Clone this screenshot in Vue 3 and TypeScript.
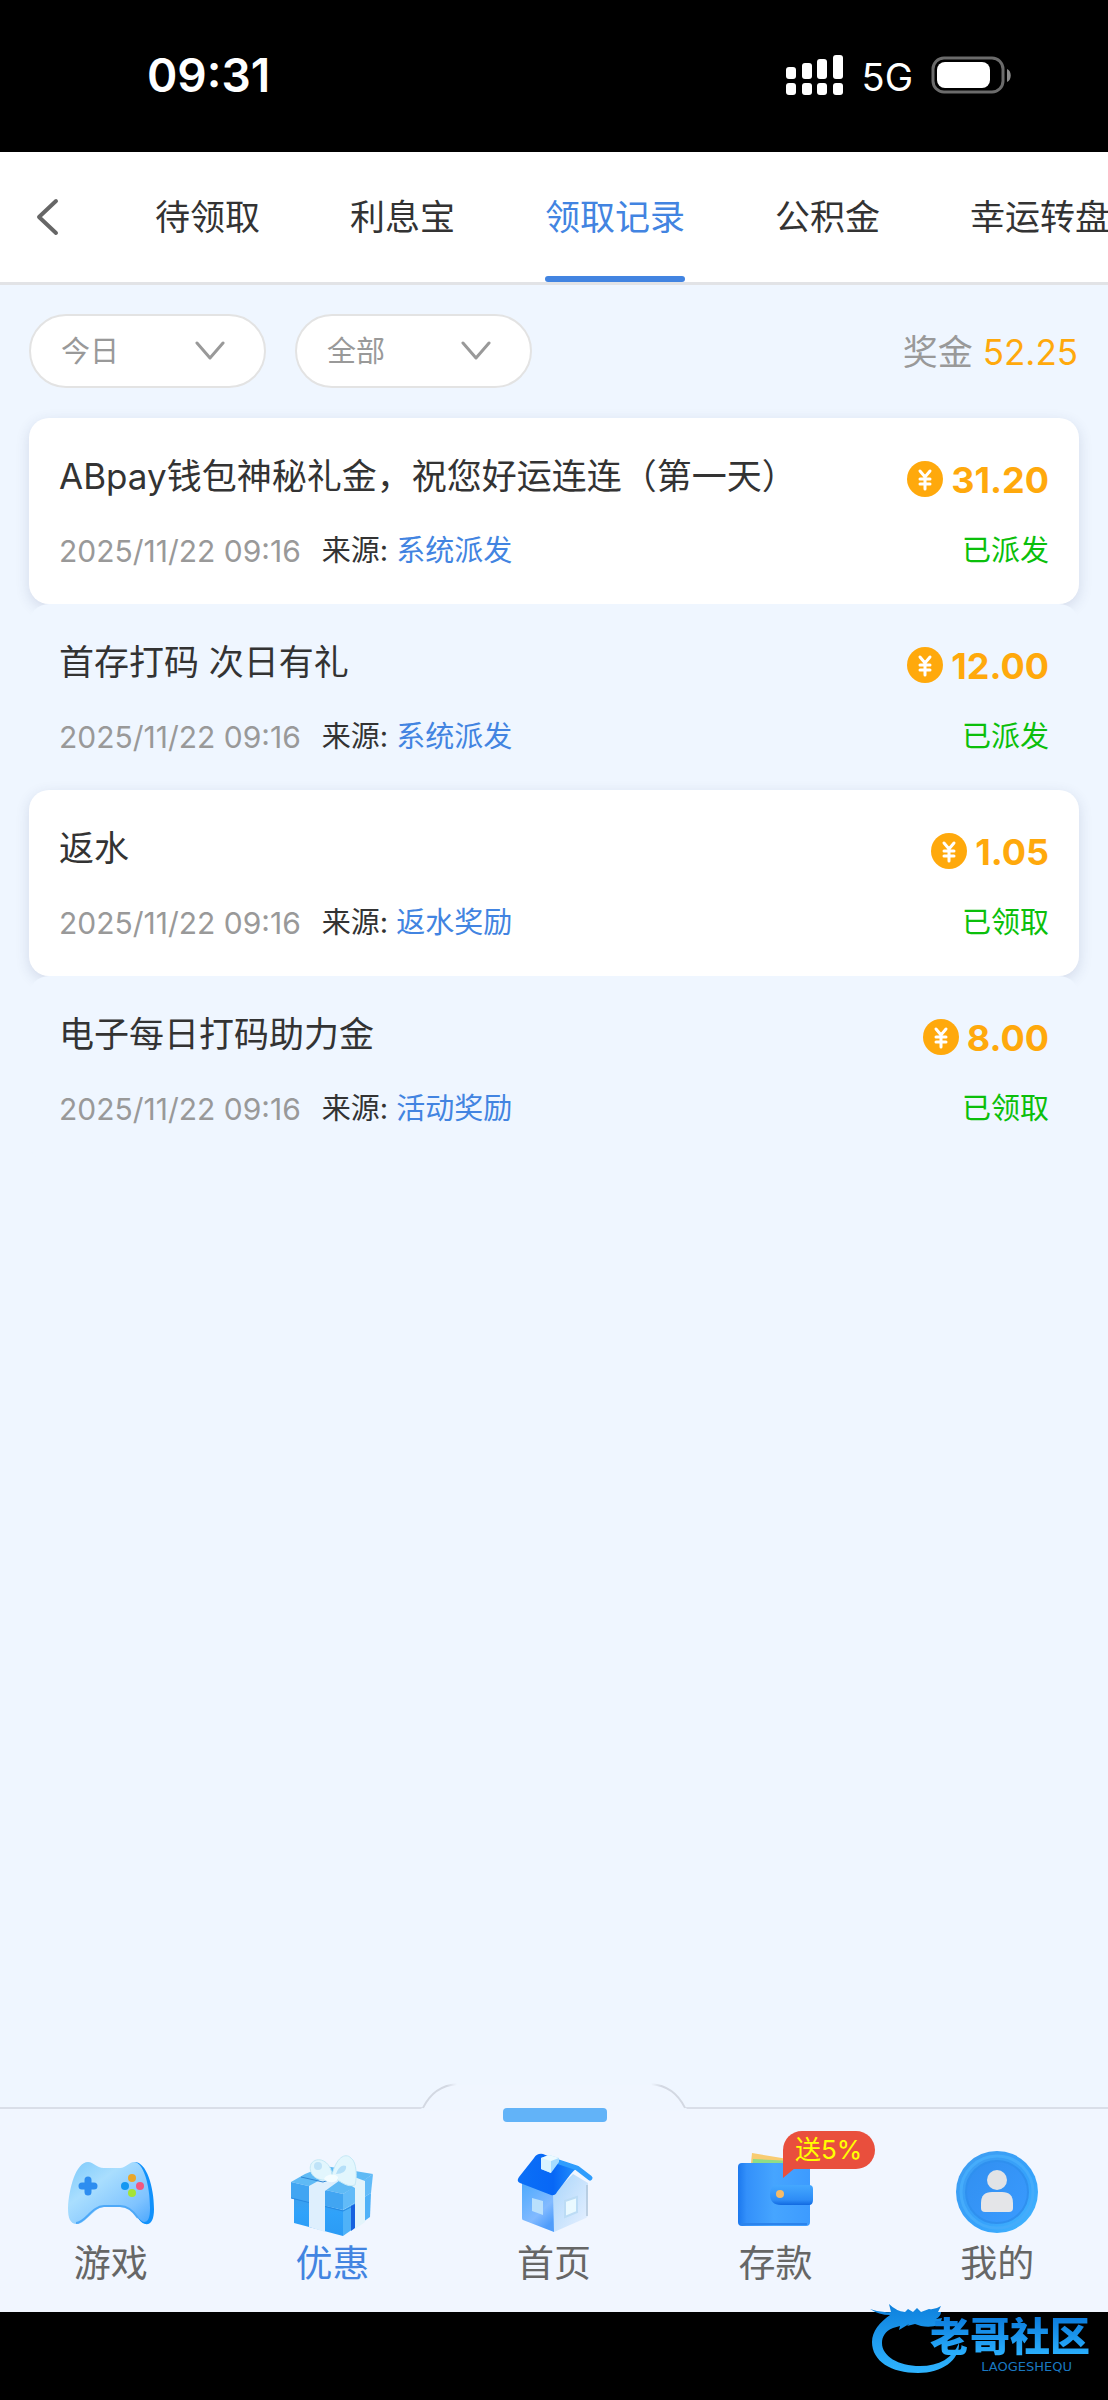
<script setup lang="ts">
import { ref } from 'vue'

interface BonusRecord {
  title: string
  time: string
  source: string
  amount: string
  status: string
}

interface NavItem {
  key: string
  label: string
  badge?: string
}

const tabs: string[] = ['待领取', '利息宝', '领取记录', '公积金', '幸运转盘']
const activeTab = ref('领取记录')
const day = ref('今日')
const kind = ref('全部')

const records: BonusRecord[] = [
  { title: 'ABpay钱包神秘礼金，祝您好运连连（第一天）', time: '2025/11/22 09:16', source: '系统派发', amount: '31.20', status: '已派发' },
  { title: '首存打码 次日有礼', time: '2025/11/22 09:16', source: '系统派发', amount: '12.00', status: '已派发' },
  { title: '返水', time: '2025/11/22 09:16', source: '返水奖励', amount: '1.05', status: '已领取' },
  { title: '电子每日打码助力金', time: '2025/11/22 09:16', source: '活动奖励', amount: '8.00', status: '已领取' },
]

const navItems: NavItem[] = [
  { key: 'game', label: '游戏' },
  { key: 'gift', label: '优惠' },
  { key: 'home', label: '首页' },
  { key: 'wallet', label: '存款', badge: '送5%' },
  { key: 'mine', label: '我的' },
]
const activeNav = ref('gift')
</script>

<template>
  <div class="app">
    <div class="status-bar">
      <span class="clock">09:31</span>
      <div class="signals">
        <svg class="bars" width="58" height="42" viewBox="0 0 58 42" fill="#fff" aria-hidden="true">
          <rect x="0" y="13" width="10" height="12" rx="3" />
          <rect x="16" y="9" width="10" height="16" rx="3" />
          <rect x="31" y="5" width="10" height="20" rx="3" />
          <rect x="47" y="1" width="10" height="24" rx="3" />
          <rect x="0" y="29" width="10" height="12" rx="3" />
          <rect x="16" y="29" width="10" height="12" rx="3" />
          <rect x="31" y="29" width="10" height="12" rx="3" />
          <rect x="47" y="29" width="10" height="12" rx="3" />
        </svg>
        <span class="network">5G</span>
        <svg width="82" height="38" viewBox="0 0 82 38" aria-hidden="true">
          <rect x="2" y="2" width="70" height="34" rx="11" fill="none" stroke="#6b6b6b" stroke-width="3" />
          <rect x="6" y="6" width="53" height="26" rx="8" fill="#fff" />
          <path d="M76 13c5 2 5 11 0 13z" fill="#8a8a8a" />
        </svg>
      </div>
    </div>

    <header class="tab-bar">
      <button class="back" type="button" aria-label="返回">
        <svg width="24" height="38" viewBox="0 0 24 38" aria-hidden="true">
          <path d="M21 3 4 19l17 16" fill="none" stroke="#666" stroke-width="4" stroke-linecap="round" stroke-linejoin="round" />
        </svg>
      </button>
      <div class="tabs">
        <button
          v-for="tab in tabs"
          :key="tab"
          type="button"
          class="tab"
          :class="{ active: tab === activeTab }"
          @click="activeTab = tab"
        >{{ tab }}</button>
      </div>
    </header>

    <main class="content">
      <div class="filters">
        <div class="picker">
          <select v-model="day" aria-label="日期">
            <option>今日</option>
          </select>
          <svg class="chevron" width="30" height="22" viewBox="0 0 30 22" aria-hidden="true">
            <path d="m2 3 13 15L28 3" fill="none" stroke="#999" stroke-width="3" stroke-linecap="round" stroke-linejoin="round" />
          </svg>
        </div>
        <div class="picker">
          <select v-model="kind" aria-label="类型">
            <option>全部</option>
          </select>
          <svg class="chevron" width="30" height="22" viewBox="0 0 30 22" aria-hidden="true">
            <path d="m2 3 13 15L28 3" fill="none" stroke="#999" stroke-width="3" stroke-linecap="round" stroke-linejoin="round" />
          </svg>
        </div>
        <p class="total">奖金 <span class="sum">52.25</span></p>
      </div>

      <ul class="records">
        <li v-for="(item, i) in records" :key="i" class="record">
          <div class="row">
            <h2 class="title">{{ item.title }}</h2>
            <div class="amount">
              <svg width="36" height="36" viewBox="0 0 36 36" aria-hidden="true">
                <circle cx="18" cy="18" r="18" fill="#ffa90c" />
                <path d="m13 10 5 6 5-6M18 16v12M13 18h10M13 23h10" fill="none" stroke="#fff" stroke-width="3" stroke-linecap="round" />
              </svg>
              <span class="value">{{ item.amount }}</span>
            </div>
          </div>
          <div class="row meta">
            <span class="time">{{ item.time }}</span>
            <span class="from">来源: <span class="source">{{ item.source }}</span></span>
            <span class="state">{{ item.status }}</span>
          </div>
        </li>
      </ul>
    </main>

    <nav class="bottom-nav">
      <svg class="bump" width="266" height="28" viewBox="0 0 270 28" aria-hidden="true">
        <defs>
          <linearGradient id="edge" x1="0" x2="1" y1="0" y2="0">
            <stop offset="0" stop-color="#d3d8e2" />
            <stop offset=".09" stop-color="#d3d8e2" />
            <stop offset=".13" stop-color="#d3d8e2" stop-opacity="0" />
            <stop offset=".87" stop-color="#d3d8e2" stop-opacity="0" />
            <stop offset=".91" stop-color="#d3d8e2" />
            <stop offset="1" stop-color="#d3d8e2" />
          </linearGradient>
        </defs>
        <path d="M0 28v-2l2-1C9 11 20 2 36 1H234C250 2 261 11 268 25l2 1v2z" fill="#f0f6ff" />
        <path d="M2 25C9 11 20 2 36 1H234C250 2 261 11 268 25" fill="none" stroke="url(#edge)" stroke-width="2" />
      </svg>
      <span class="grip"></span>
      <a
        v-for="item in navItems"
        :key="item.key"
        href="#"
        class="nav-item"
        :class="{ active: item.key === activeNav }"
        @click.prevent="activeNav = item.key"
      >
        <span class="icon">
          <svg v-if="item.key === 'game'" width="90" height="90" viewBox="0 0 90 90" aria-hidden="true">
            <defs>
              <linearGradient id="pad" x1="0" x2="1" y1="0" y2="1">
                <stop offset="0" stop-color="#7cc9fb" />
                <stop offset=".35" stop-color="#a9defe" />
                <stop offset=".75" stop-color="#7fc3ff" />
                <stop offset="1" stop-color="#4aa6fd" />
              </linearGradient>
            </defs>
            <path d="M68 12c12-1 20 24 20 47 0 11-3 16-9 15-7-2-9-12-17-16z" fill="#1191fb" />
            <path d="M22 12c6 0 8 6 16 6h16c6 0 9-6 14-6 9 0 16 22 16 46 0 10-2 14-6 14-7-2-10-15-24-15H38c-10 0-18 17-27 17-7 0-9-6-9-16 1-20 8-46 20-46z" fill="url(#pad)" />
            <path d="M10 73c9 0 16-17 28-17h16c9 0 14 6 18 12" fill="none" stroke="#4ea9f8" stroke-width="2" />
            <path d="M22 30v12M16 36h12" stroke="#2d8df0" stroke-width="7" stroke-linecap="round" />
            <circle cx="66" cy="28" r="4" fill="#e9a72b" />
            <circle cx="74" cy="36" r="4" fill="#f2577f" />
            <circle cx="59" cy="36" r="4" fill="#1397f2" />
            <circle cx="66" cy="43" r="4" fill="#a5e437" />
          </svg>
          <svg v-else-if="item.key === 'gift'" width="90" height="90" viewBox="0 0 90 90" aria-hidden="true">
            <defs>
              <linearGradient id="box" x1="0" x2="0" y1="0" y2="1">
                <stop offset="0" stop-color="#3a9fee" />
                <stop offset=".4" stop-color="#2fa2fa" />
                <stop offset="1" stop-color="#2b9bf5" />
              </linearGradient>
            </defs>
            <path d="M7 48 56 60v26L7 73z" fill="url(#box)" />
            <path d="m56 60 28-17-1 24-27 19z" fill="#4fb2f8" />
            <path d="M4 32 18 24l20-8 48 8-20 14-10 6z" fill="#5fbaf5" />
            <path d="m4 32 52 12v16L4 48z" fill="#41a5f2" />
            <path d="m56 44 30-20-2 19-28 17z" fill="#62bbf8" />
            <path d="m4 48 52 13 10-5" fill="none" stroke="#2589e3" stroke-width="1" />
            <path d="m64 56 4-2v24l-4 3z" fill="#1762df" />
            <path d="M22 36 42 25l14 3-18 13v41l-16-5z" fill="#deeffd" />
            <path d="m50 27 18 11v41l10-7V31l-16-6z" fill="#e3f4fb" />
            <path d="m14 27 22 5 6-2" fill="none" stroke="#2f86d4" stroke-width="1" />
            <path d="M40 30C27 31 21 22 24 14c6-9 20-3 21 11C49 8 58 2 64 8c6 4 6 20 4 27-8 3-15-4-22-8-2 3-4 4-6 3z" fill="#e2f6fd" stroke="#c5e9f6" stroke-width="1" />
            <circle cx="31" cy="16" r="4" fill="#bfe3f8" />
            <path d="M49 24c2-7 7-10 10-8 1 5-4 8-10 8" fill="#b4dff8" />
            <path d="M37 29c2-5 11-6 14-2 0 6-9 7-14 2" fill="#f4fdff" />
          </svg>
          <svg v-else-if="item.key === 'home'" width="90" height="90" viewBox="0 0 90 90" aria-hidden="true">
            <defs>
              <linearGradient id="wallL" x1="0" x2=".6" y1="0" y2="1">
                <stop offset="0" stop-color="#4ba9fd" />
                <stop offset=".7" stop-color="#82baff" />
                <stop offset="1" stop-color="#4f9dfb" />
              </linearGradient>
              <linearGradient id="wallR" x1="0" x2="1" y1="0" y2="1">
                <stop offset="0" stop-color="#a8d5fb" />
                <stop offset="1" stop-color="#e9f1ff" />
              </linearGradient>
              <linearGradient id="roof" x1="0" x2="1" y1="0" y2="0">
                <stop offset="0" stop-color="#0b70f7" />
                <stop offset=".6" stop-color="#0767f6" />
                <stop offset="1" stop-color="#2491fc" />
              </linearGradient>
            </defs>
            <path d="m13 32 32 12v38L14 70q-1 0-1-2z" fill="url(#wallL)" />
            <path d="m44 44 20-20 15 9v32q0 2-2 3L45 82z" fill="url(#wallR)" />
            <path d="M78 35v31" stroke="#9fb5c8" stroke-width="1" />
            <path d="M25 8q3-5 9-4l34 14q-4 3-7 7L48 42q-2 4-6 3L11 33q-4-2-1-6z" fill="url(#roof)" />
            <path d="M50 12 68 18 81 28" fill="none" stroke="#2f9dfd" stroke-width="5" stroke-linecap="round" stroke-linejoin="round" />
            <path d="m32 8 8-3 10 3v4l-8 11-10-4z" fill="#a5dcff" />
            <path d="m32 8 10 2v13l-10-4z" fill="#d8f3ff" />
            <path d="m32 8 8-3 10 3-8 3z" fill="#ecfaff" />
            <path d="m23 48 11 3v14l-11-4z" fill="#b9e0fc" />
            <path d="m56 51 12-4v15l-12 5z" fill="#e9f9ff" stroke="#bcdcf5" stroke-width="2" />
          </svg>
          <svg v-else-if="item.key === 'wallet'" width="90" height="90" viewBox="0 0 90 90" aria-hidden="true">
            <defs>
              <linearGradient id="purse" x1="0" x2="1" y1="0" y2="0">
                <stop offset="0" stop-color="#1b78ee" />
                <stop offset=".12" stop-color="#3390fa" />
                <stop offset=".5" stop-color="#46a5ff" />
                <stop offset="1" stop-color="#3d9bff" />
              </linearGradient>
              <linearGradient id="flap" x1="0" x2="0" y1="0" y2="1">
                <stop offset="0" stop-color="#45a8ff" />
                <stop offset=".75" stop-color="#2d8cf6" />
                <stop offset="1" stop-color="#1169e0" />
              </linearGradient>
            </defs>
            <path d="m21 3 42 7-2 12H19z" fill="#f8cc72" />
            <path d="m22 9 40 2v7H21z" fill="#8fdd86" />
            <rect x="7" y="13" width="72" height="63" rx="4" fill="url(#purse)" />
            <path d="M10 74h66" stroke="#2b83ec" stroke-width="2" />
            <path d="M47 35h31q4 0 4 4v11q0 5-4 5H50q-11 0-11-11 0-9 8-9z" fill="url(#flap)" />
            <circle cx="49" cy="44" r="4" fill="#f6bb68" />
          </svg>
          <svg v-else width="90" height="90" viewBox="0 0 90 90" aria-hidden="true">
            <defs>
              <linearGradient id="ring" x1="0" x2="1" y1="0" y2="1">
                <stop offset="0" stop-color="#3f9df1" />
                <stop offset=".6" stop-color="#36a2fb" />
                <stop offset="1" stop-color="#43b8ff" />
              </linearGradient>
              <linearGradient id="dish" x1="0" x2="1" y1="0" y2="1">
                <stop offset="0" stop-color="#318ff0" />
                <stop offset="1" stop-color="#3a9bff" />
              </linearGradient>
            </defs>
            <circle cx="45" cy="42" r="41" fill="url(#ring)" />
            <circle cx="45" cy="42" r="36" fill="none" stroke="#45acfb" stroke-width="3" />
            <circle cx="45" cy="42" r="31" fill="url(#dish)" stroke="#2f90ef" stroke-width="2" />
            <circle cx="45" cy="30" r="10" fill="#e1e3e6" />
            <path d="M29 58V53q0-11 11-11h10q11 0 11 11v5q0 4-4 4H33q-4 0-4-4z" fill="#e4e5e8" />
          </svg>
          <span v-if="item.badge" class="badge">{{ item.badge }}</span>
        </span>
        <span class="label">{{ item.label }}</span>
      </a>
    </nav>

    <footer class="home-area">
      <div class="mark">
        <svg class="dragon" width="96" height="80" viewBox="0 0 96 80" aria-hidden="true">
          <defs>
            <linearGradient id="scale" x1="0" x2="0" y1="0" y2="1">
              <stop offset="0" stop-color="#0d80dc" />
              <stop offset="1" stop-color="#2fb4ff" />
            </linearGradient>
          </defs>
          <path d="M0 12q10 4 21 3l-2-8q7 7 16 8l3-3 5 3 4-4 4 4 8-3q6 1 12-3l-3 6h3q0 4-5 7l6-1q-1 6-6 6l3 1q-9 3-18 1l-6-2-8 2 2-2-10 6 1-4-7 2C15 34 12 40 12 46c0 13 16 23 38 23 19 0 33-8 39-23 1 17-17 30-41 30C21 76 2 64 2 45c0-11 8-20 18-27Q9 18 0 12z" fill="url(#scale)" />
        </svg>
        <div class="words">
          <strong>老哥社区</strong>
          <small>LAOGESHEQU</small>
        </div>
      </div>
    </footer>
  </div>
</template>

<style>
body {
  margin: 0;
  background: #eff6ff;
}
</style>

<style scoped>
.app {
  display: flex;
  flex-direction: column;
  min-height: 100vh;
  overflow: hidden;
  font-family: Inter, "Noto Sans CJK SC", sans-serif;
  color: #333;
}

button,
select {
  font: inherit;
  color: inherit;
  border: 0;
  background: none;
  padding: 0;
  margin: 0;
}

.status-bar {
  display: flex;
  align-items: center;
  justify-content: space-between;
  box-sizing: border-box;
  height: 152px;
  padding: 0 95px 2px 147px;
  background: #000;
  color: #fff;
}

.clock {
  font-size: 46px;
  font-weight: 600;
}

.signals {
  display: flex;
  align-items: center;
  gap: 18px;
}

.network {
  font-size: 38px;
  line-height: 40px;
  padding-top: 4px;
}

.tab-bar {
  display: flex;
  height: 130px;
  background: #fff;
  border-bottom: 3px solid #e2e3e6;
}

.back {
  display: flex;
  align-items: center;
  flex: none;
  box-sizing: border-box;
  width: 110px;
  padding-left: 35px;
}

.tabs {
  display: flex;
  flex: 1;
  overflow: hidden;
}

.tab {
  flex: none;
  position: relative;
  margin: 0 45px;
  padding-bottom: 5px;
  font-size: 35px;
  white-space: nowrap;
}

.tab:last-child {
  margin-right: 0;
}

.tab.active {
  color: #4284e1;
}

.tab.active::after {
  content: "";
  position: absolute;
  left: 0;
  right: 0;
  bottom: 0;
  height: 6px;
  border-radius: 3px;
  background: #4284e1;
}

.content {
  flex: 1;
  padding: 29px 29px 0;
}

.filters {
  display: flex;
  align-items: center;
  gap: 29px;
  margin-bottom: 30px;
}

.picker {
  display: flex;
  align-items: center;
  position: relative;
  box-sizing: border-box;
  width: 237px;
  height: 74px;
  border: 2px solid #e3e3e3;
  border-radius: 37px;
  background: #fff;
}

.picker select {
  appearance: none;
  width: 100%;
  height: 100%;
  padding-left: 30px;
  border-radius: 37px;
  font-size: 29px;
  color: #999;
}

.chevron {
  position: absolute;
  right: 39px;
  pointer-events: none;
}

.total {
  margin: 0 1px 4px auto;
  font-size: 35px;
  color: #999;
}

.sum {
  color: #ffa90c;
}

.records {
  list-style: none;
  margin: 0;
  padding: 0;
}

.record {
  padding: 37px 30px 32px;
  border-radius: 20px;
  background: #eff6ff;
}

.record:nth-child(odd) {
  background: #fff;
  box-shadow: 0 4px 14px rgba(50, 60, 110, 0.15);
}

.row {
  display: flex;
  align-items: flex-start;
  justify-content: space-between;
}

.title {
  margin: 0;
  font-size: 35px;
  font-weight: 400;
  line-height: 42px;
}

.amount {
  display: flex;
  align-items: center;
  gap: 8px;
  font-size: 36px;
  font-weight: 700;
  line-height: 44px;
  color: #ffa90c;
}

.value {
  padding-top: 3px;
}

.meta {
  justify-content: flex-start;
  margin-top: 28px;
  font-size: 29px;
  line-height: 42px;
}

.time {
  font-size: 30px;
  color: #999;
}

.from {
  margin-left: 21px;
}

.source {
  color: #4284e1;
}

.state {
  margin-left: auto;
  color: #0bbf0b;
}

.bottom-nav {
  display: flex;
  position: relative;
  box-sizing: border-box;
  padding: 41px 0 25px;
  border-top: 2px solid #d9dee8;
  background: #f1f6ff;
}

.bump {
  position: absolute;
  left: 50%;
  bottom: 100%;
  margin: 0 0 -2px -133px;
}

.grip {
  position: absolute;
  left: 50%;
  top: -1px;
  width: 104px;
  height: 14px;
  margin-left: -51px;
  border-radius: 4px;
  background: #62b3f8;
}

.nav-item {
  display: flex;
  flex: 1;
  flex-direction: column;
  align-items: center;
  color: #666;
  text-decoration: none;
}

.nav-item.active {
  color: #4284e1;
}

.icon {
  position: relative;
  width: 90px;
  height: 90px;
}

.label {
  font-size: 37px;
  line-height: 47px;
}

.badge {
  position: absolute;
  left: 52px;
  top: -19px;
  width: 92px;
  border-radius: 19px 19px 19px 0;
  background: #e94f3d;
  color: #ff0;
  font-size: 26px;
  line-height: 38px;
  text-align: center;
  white-space: nowrap;
}

.badge::after {
  content: "";
  position: absolute;
  left: 0;
  top: 37px;
  border-top: 10px solid #e94f3d;
  border-right: 12px solid transparent;
}

.home-area {
  position: relative;
  height: 88px;
  background: #000;
}

.mark {
  display: flex;
  justify-content: space-between;
  position: absolute;
  right: 18px;
  top: -15px;
  width: 220px;
}

.dragon {
  flex: none;
}

.words {
  display: flex;
  flex-direction: column;
  align-items: flex-end;
  padding-top: 20px;
  margin-left: -40px;
}

.words strong {
  font-size: 40px;
  font-weight: 900;
  line-height: 40px;
  background: linear-gradient(#0b7bdc, #2cb2ff);
  background-clip: text;
  color: transparent;
}

.words small {
  margin-top: 3px;
  padding-right: 18px;
  font-family: "DejaVu Sans", sans-serif;
  font-size: 13px;
  line-height: 14px;
  color: #1a78c0;
}
</style>
